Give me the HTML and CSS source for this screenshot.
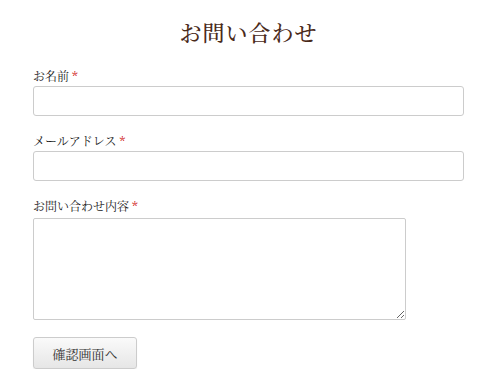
FILE: index.html
```html
<!DOCTYPE html>
<html lang="ja">
  <head>
    <meta charset="utf-8">
    <title>お問い合わせ</title>
    <link rel="stylesheet" href="styles.css">
  </head>
  <body>
    <div id="contact">
      <h1 class="title">お問い合わせ</h1>
      <form class="form">
        <div class="field">
          <label class="label">お名前 <span class="req">*</span></label>
          <input class="input" type="text">
        </div>
        <div class="field">
          <label class="label">メールアドレス <span class="req">*</span></label>
          <input class="input" type="email">
        </div>
        <div class="field">
          <label class="label">お問い合わせ内容 <span class="req">*</span></label>
          <textarea class="textarea"></textarea>
        </div>
        <button class="button" type="button">確認画面へ</button>
      </form>
    </div>
  </body>
</html>
```

FILE: styles.css
```css
body{
  margin:0;
  background:#fff;
  font-family:"Noto Serif CJK JP", "Liberation Serif", "Noto Sans CJK JP", serif;
  color:#333;
}
#contact{
  width:431px;
  margin:0 0 0 33px;
  padding-top:16px;
}
.title{
  margin:0 0 20px;
  text-align:center;
  font-size:22px;
  font-weight:500;
  line-height:32px;
  color:#4a2a1a;
  letter-spacing:1px;
}
.field{
  display:flex;
  flex-direction:column;
  margin-bottom:17px;
}
.label{
  font-size:12px;
  line-height:16px;
  margin-bottom:2px;
  color:#222;
}
.req{
  color:#c00;
}
.input{
  box-sizing:border-box;
  width:431px;
  height:30px;
  border:1px solid #ccc;
  border-radius:3px;
  margin:0;
}
.textarea{
  box-sizing:border-box;
  width:373px;
  height:102px;
  border:1px solid #ccc;
  border-radius:2px;
  margin:2px 0 0;
  resize:both;
}
.button{
  margin-top:0;
  width:104px;
  height:32px;
  border:1px solid #ccc;
  border-radius:3px;
  background:linear-gradient(#fafafa, #e6e6e6);
  font-family:inherit;
  font-size:13px;
  color:#333;
  box-shadow:0 1px 1px rgba(0,0,0,0.08);
}
```
